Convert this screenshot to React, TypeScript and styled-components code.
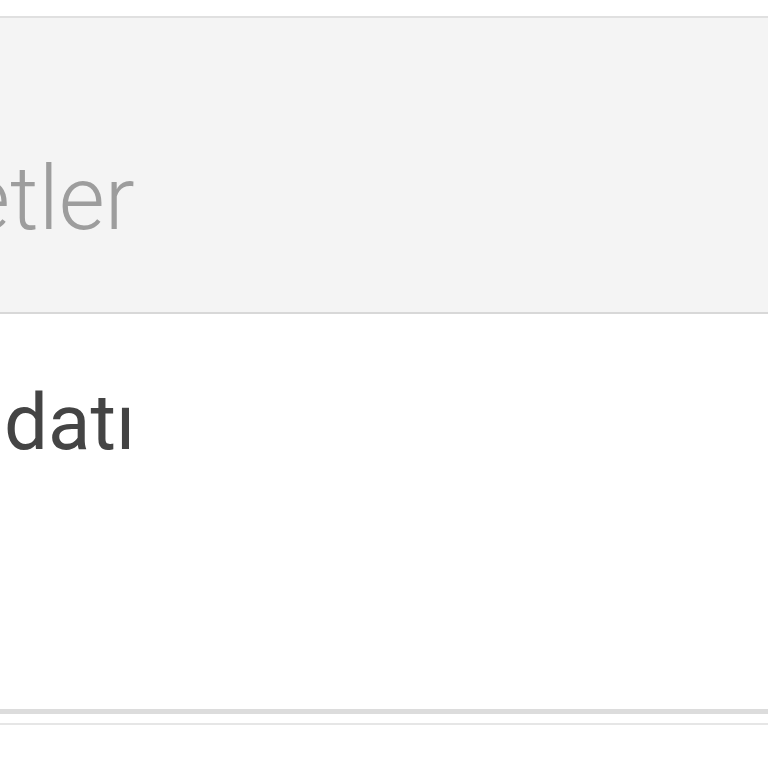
import React from 'react'
import styled, { createGlobalStyle } from 'styled-components'

const GlobalStyle = createGlobalStyle`
  html, body {
    margin: 0;
    padding: 0;
    background: #ffffff;
  }
  body {
    font-family: Roboto, "Noto Sans", "Liberation Sans", sans-serif;
  }
`

const Page = styled.div`
  width: 768px;
  height: 768px;
  overflow: hidden;
  padding-top: 16px;
  box-sizing: border-box;
  background: #ffffff;
`

const HeaderPanel = styled.div`
  height: 298px;
  box-sizing: border-box;
  border-top: 2px solid #e0e0e0;
  border-bottom: 2px solid #d8d8d8;
  background: #f4f4f4;
  display: flex;
  align-items: flex-end;
  padding-bottom: 69px;
  overflow: hidden;
`

const Title = styled.span<{ $offset: number }>`
  display: block;
  margin-left: ${({ $offset }) => $offset}px;
  font-family: Roboto, "Noto Sans", sans-serif;
  font-weight: 300;
  font-size: 89px;
  line-height: 1;
  color: #9d9d9d;
  white-space: nowrap;
`

const ItemRow = styled.div`
  height: 395px;
  box-sizing: border-box;
  display: flex;
  align-items: flex-start;
  padding-top: 70px;
  overflow: hidden;
`

const ItemLabel = styled.span<{ $offset: number }>`
  display: block;
  margin-left: ${({ $offset }) => $offset}px;
  font-family: Roboto, "Noto Sans", sans-serif;
  font-weight: 400;
  font-size: 78px;
  line-height: 1;
  color: #444444;
  white-space: nowrap;
`

const ThickRule = styled.div`
  height: 5px;
  background: #dcdcdc;
`

const Gap = styled.div`
  height: 9px;
`

const ThinRule = styled.div`
  height: 2px;
  background: #e6e6e6;
`

const App = () => {
  return (
    <>
      <GlobalStyle />
      <Page>
        <HeaderPanel>
          <Title $offset={-36}>etler</Title>
        </HeaderPanel>
        <ItemRow>
          <ItemLabel $offset={4}>datı</ItemLabel>
        </ItemRow>
        <ThickRule />
        <Gap />
        <ThinRule />
      </Page>
    </>
  )
}

export default App
